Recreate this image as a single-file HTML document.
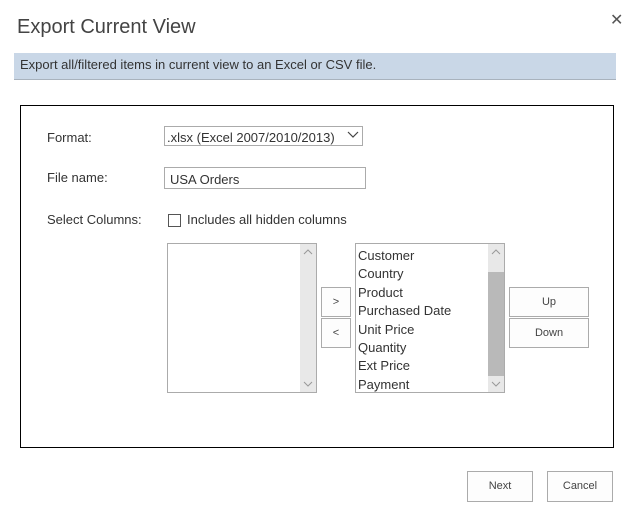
<!DOCTYPE html>
<html><head><style>
body{margin:0;width:636px;height:517px;background:#fff;font-family:"Liberation Sans",sans-serif;color:#444;position:relative;overflow:hidden}
.a{position:absolute}
.t{font-size:13px;color:#333}
.lb{position:absolute;border:1px solid #ababab;background:#fff;box-sizing:border-box}
.sb{position:absolute;right:0;top:0;width:16px;height:100%;background:#e8e8e8}
.btn{position:absolute;border:1px solid #ababab;background:#fdfdfd;box-sizing:border-box;font-size:11px;color:#444;text-align:center}
</style></head><body>
<div class="a" style="left:17px;top:16px;font-size:20px;color:#444">Export Current View</div>
<div class="a" style="left:610px;top:10px;font-size:16px;color:#555">✕</div>
<div class="a" style="left:14px;top:53px;width:602px;height:26px;background:#c9d7e7;border-bottom:1px solid #a8b2bd"></div>
<div class="a t" style="left:20px;top:57px;font-size:13px;color:#333">Export all/filtered items in current view to an Excel or CSV file.</div>
<div class="a" style="left:20px;top:105px;width:592px;height:341px;border:1px solid #000"></div>
<div class="a t" style="left:47px;top:130px">Format:</div>
<div class="a" style="left:164px;top:126px;width:199px;height:20px;border:1px solid #ababab;box-sizing:border-box"></div>
<div class="a t" style="left:167px;top:130px">.xlsx (Excel 2007/2010/2013)</div>
<svg class="a" style="left:347px;top:131px" width="12" height="8"><path d="M1 1 L6 6 L11 1" fill="none" stroke="#444" stroke-width="1.2"/></svg>
<div class="a t" style="left:47px;top:170px">File name:</div>
<div class="a" style="left:164px;top:167px;width:202px;height:22px;border:1px solid #ababab;box-sizing:border-box"></div>
<div class="a t" style="left:170px;top:172px">USA Orders</div>
<div class="a t" style="left:47px;top:212px">Select Columns:</div>
<div class="a" style="left:168px;top:214px;width:13px;height:13px;border:1px solid #555;box-sizing:border-box"></div>
<div class="a t" style="left:187px;top:212px">Includes all hidden columns</div>
<div class="lb" style="left:167px;top:243px;width:150px;height:150px"><div class="sb"></div>
<svg class="a" style="right:3px;top:5px" width="10" height="6"><path d="M1 5 L5 1 L9 5" fill="none" stroke="#999"/></svg>
<svg class="a" style="right:3px;bottom:5px" width="10" height="6"><path d="M1 1 L5 5 L9 1" fill="none" stroke="#999"/></svg></div>
<div class="lb" style="left:355px;top:243px;width:150px;height:150px"><div class="sb"><div class="a" style="left:0;top:28px;width:16px;height:104px;background:#b9b9b9"></div></div>
<svg class="a" style="right:3px;top:5px" width="10" height="6"><path d="M1 5 L5 1 L9 5" fill="none" stroke="#999"/></svg>
<svg class="a" style="right:3px;bottom:5px" width="10" height="6"><path d="M1 1 L5 5 L9 1" fill="none" stroke="#999"/></svg>
<div class="a t" style="left:2px;top:3px;line-height:18.4px">Customer<br>Country<br>Product<br>Purchased Date<br>Unit Price<br>Quantity<br>Ext Price<br>Payment</div></div>
<div class="btn" style="left:321px;top:287px;width:30px;height:30px;line-height:28px">&gt;</div>
<div class="btn" style="left:321px;top:318px;width:30px;height:30px;line-height:28px">&lt;</div>
<div class="btn" style="left:509px;top:287px;width:80px;height:30px;line-height:28px">Up</div>
<div class="btn" style="left:509px;top:318px;width:80px;height:30px;line-height:28px">Down</div>
<div class="btn" style="left:467px;top:471px;width:66px;height:31px;line-height:29px">Next</div>
<div class="btn" style="left:547px;top:471px;width:66px;height:31px;line-height:29px">Cancel</div>
</body></html>
